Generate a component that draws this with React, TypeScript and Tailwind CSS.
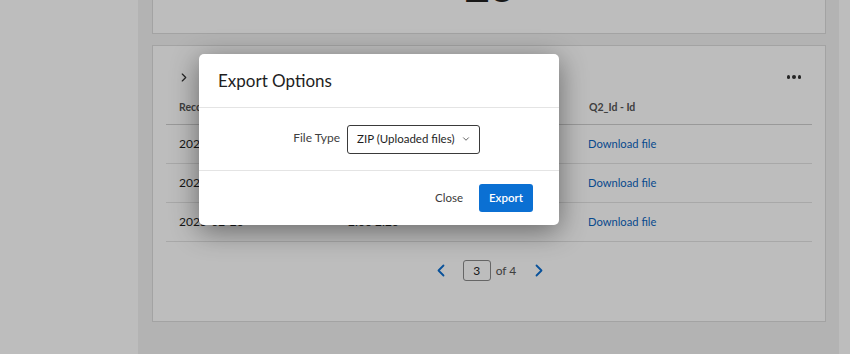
import { ChevronDown } from 'lucide-react';

const rows = [
  { date: '2025-02-20', duration: '2:06 2:26' },
  { date: '2025-02-20', duration: '2:05 2:23' },
  { date: '2025-02-20', duration: '2:00 2:20' },
];

function Chevron({ dir, className }: { dir: 'left' | 'right'; className?: string }) {
  return (
    <svg width="8" height="13" viewBox="0 0 8 13" className={className} fill="none">
      <path
        d={dir === 'left' ? 'M6.5 1.5 1.5 6.5l5 5' : 'M1.5 1.5l5 5-5 5'}
        stroke="currentColor"
        strokeWidth="1.8"
        strokeLinecap="round"
        strokeLinejoin="round"
      />
    </svg>
  );
}

export default function App() {
  return (
    <div
      className="relative flex h-[354px] w-[850px] overflow-hidden bg-[#f2f2f2] text-[#1f1f1f]"
      style={{ fontFamily: 'Lato, "Open Sans", sans-serif' }}
    >
      {/* Sidebar */}
      <aside className="w-[138px] shrink-0 bg-white" />

      {/* Main content */}
      <main className="flex-1 pl-[14px] pr-[13px]">
        <div className="-mt-[100px] flex flex-col gap-[11px]">
          {/* Top stat card (scrolled off) */}
          <div className="h-[134px] border border-[#dcdcdc] bg-white pt-[62px] text-center">
            <span className="text-[44px] font-bold leading-none tracking-tight text-[#222]">26</span>
          </div>

          {/* Table card */}
          <div className="h-[277px] border border-[#dcdcdc] bg-white px-[13px] pt-[20px]">
            <div className="flex h-[22px] items-center justify-between pl-[15px] pr-[11px]">
              <Chevron dir="right" className="h-[9px] w-[6px] text-[#333]" />
              <div className="flex gap-[2px]">
                <span className="h-[3.5px] w-[3.5px] rounded-full bg-[#333]" />
                <span className="h-[3.5px] w-[3.5px] rounded-full bg-[#333]" />
                <span className="h-[3.5px] w-[3.5px] rounded-full bg-[#333]" />
              </div>
            </div>

            <div className="mt-[4px]">
              <div className="grid h-[33px] grid-cols-[169px_241px_1fr] items-center border-b border-[#cfcfcf] text-[10.5px] font-bold text-[#555]">
                <span className="pl-[13px]">Recorded Date</span>
                <span className="pl-[13px]">Duration</span>
                <span className="pl-[13px]">Q2_Id - Id</span>
              </div>
              {rows.map((row, i) => (
                <div
                  key={i}
                  className="grid h-[39px] grid-cols-[169px_241px_1fr] items-center border-b border-[#e3e3e3] text-[12px]"
                >
                  <span className="pl-[13px]">{row.date}</span>
                  <span className="pl-[13px]">{row.duration}</span>
                  <span className="pl-[12px] text-[11.2px] text-[#0b64c0]">Download file</span>
                </div>
              ))}
            </div>

            {/* Pagination */}
            <div className="mt-[18px] flex h-[21px] items-center justify-center pl-[2px] text-[12px]">
              <Chevron dir="left" className="text-[#0b6ed0]" />
              <div className="ml-[18px] flex h-[21px] w-[28px] items-center justify-center rounded-[3px] border border-[#8a8a8a]">
                3
              </div>
              <span className="ml-[5px] text-[#555]">of 4</span>
              <Chevron dir="right" className="ml-[19px] text-[#0b6ed0]" />
            </div>
          </div>
        </div>
      </main>

      <div className="w-[11px] shrink-0 bg-white" />

      {/* Modal backdrop */}
      <div className="absolute inset-0 bg-black/[0.26]" />

      {/* Export Options modal */}
      <div className="absolute left-[199px] top-[54px] w-[360px] rounded-[5px] bg-white shadow-[0_6px_28px_rgba(0,0,0,0.45)]">
        <div className="flex h-[54px] items-center border-b border-[#e4e4e4] px-[19px]">
          <h2 className="text-[17px] text-[#1e1e1e]">Export Options</h2>
        </div>
        <div className="flex h-[63px] items-center border-b border-[#e4e4e4]">
          <label className="w-[141px] pb-[3px] text-right text-[12px] text-[#404040]">File Type</label>
          <div className="ml-[7px] flex h-[29px] w-[133px] items-center justify-between rounded-[3px] border border-[#3a3a3a] pl-[9px] pr-[8px] text-[11.5px] text-[#1e1e1e]">
            <span>ZIP (Uploaded files)</span>
            <ChevronDown className="h-[10px] w-[10px] shrink-0 text-[#444]" strokeWidth={2} />
          </div>
        </div>
        <div className="flex h-[54px] items-center justify-end gap-[16px] pr-[26px]">
          <button className="text-[11.5px] text-[#3a3a3a]">Close</button>
          <button className="h-[28px] w-[54px] rounded-[3px] bg-[#0b70d3] text-[11.5px] font-semibold text-white">
            Export
          </button>
        </div>
      </div>
    </div>
  );
}
